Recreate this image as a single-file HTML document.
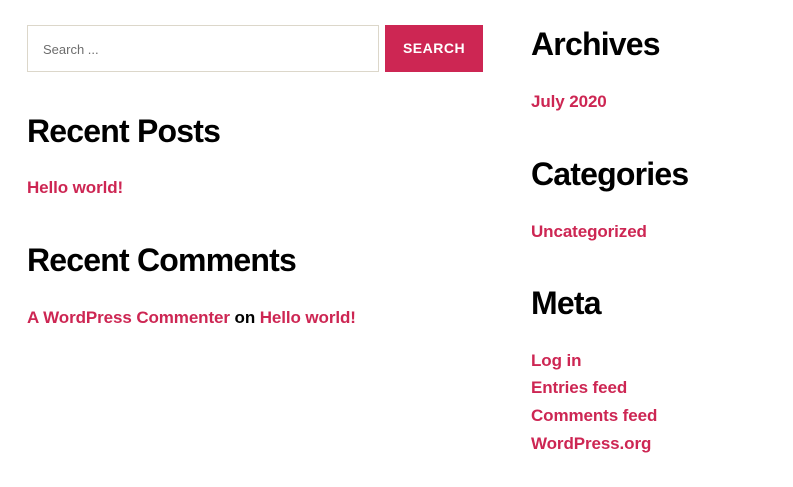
<!DOCTYPE html>
<html><head><style>
body{margin:0;width:793px;height:487px;background:#fff;font-family:"Liberation Sans",Arial,sans-serif;position:relative;overflow:hidden}
.a{position:absolute;white-space:nowrap}
h2{margin:0;font-size:32px;font-weight:700;letter-spacing:-0.8px;color:#000;line-height:1}
.l{font-size:17px;font-weight:700;color:#cd2653;line-height:1;letter-spacing:-0.1px}
.in{position:absolute;left:27px;top:25px;width:350px;height:45px;border:1px solid #dcd7ca;box-sizing:content-box}
.in span{position:absolute;left:15px;top:16px;font-size:13px;color:#6d6d6d}
.btn{position:absolute;left:385px;top:25px;width:98px;height:47px;background:#cd2653;color:#fff;font-size:14px;font-weight:700;letter-spacing:0.5px;text-align:center;line-height:47px}
</style></head><body>
<div class="in"><span>Search ...</span></div>
<div class="btn">SEARCH</div>
<h2 class="a" style="left:27px;top:115px">Recent Posts</h2>
<div class="a l" style="left:27px;top:179px">Hello world!</div>
<h2 class="a" style="left:27px;top:244px">Recent Comments</h2>
<div class="a l" style="left:27px;top:309px">A WordPress Commenter <span style="color:#000">on</span> Hello world!</div>
<h2 class="a" style="left:531px;top:28px">Archives</h2>
<div class="a l" style="left:531px;top:93px">July 2020</div>
<h2 class="a" style="left:531px;top:158px">Categories</h2>
<div class="a l" style="left:531px;top:223px">Uncategorized</div>
<h2 class="a" style="left:531px;top:287px">Meta</h2>
<div class="a l" style="left:531px;top:352px">Log in</div>
<div class="a l" style="left:531px;top:379px">Entries feed</div>
<div class="a l" style="left:531px;top:407px">Comments feed</div>
<div class="a l" style="left:531px;top:435px">WordPress.org</div>
</body></html>
